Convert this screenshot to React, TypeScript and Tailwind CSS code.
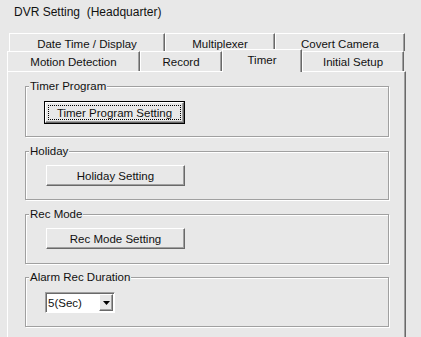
import React from 'react';

const raised =
  'border border-t-white border-l-white border-r-[#696969] border-b-[#696969] shadow-[inset_-1px_-1px_0_#a0a0a0]';

const tabBase =
  'flex items-center justify-center border-t border-l border-r border-t-white border-l-white border-r-[#696969] shadow-[inset_-1px_0_0_#a0a0a0]';

function Group({ title, box, children }: { title: string; box: string; children: React.ReactNode }) {
  return (
    <div className={`relative shrink-0 w-[364px] border border-[#a0a0a0] shadow-[inset_1px_1px_0_#ffffff,1px_1px_0_#ffffff] pl-[20px] ${box}`}>
      <span className="absolute -top-[7px] left-[3px] px-[1px] bg-[#e8e8e8] leading-[13px]">{title}</span>
      {children}
    </div>
  );
}

function Button({ label, focused }: { label: string; focused?: boolean }) {
  if (focused) {
    return (
      <div className="w-[141px] h-[23px] -ml-[2px] border border-black">
        <div className={`h-full ${raised} p-[2px]`}>
          <div className="h-full border border-dotted border-black flex items-center justify-center">
            {label}
          </div>
        </div>
      </div>
    );
  }
  return (
    <div className={`w-[139px] h-[21px] ${raised} flex items-center justify-center`}>{label}</div>
  );
}

export default function App() {
  return (
    <div
      className="w-[421px] h-[337px] overflow-hidden bg-[#e8e8e8] text-[#111] text-[11.5px] leading-[14px] flex flex-col"
      style={{ fontFamily: '"Liberation Sans", Arial, sans-serif' }}
    >
      <div className="shrink-0 h-[33px] pl-[14px] pt-[5px] text-[12px]">DVR Setting&nbsp; (Headquarter)</div>

      {/* tabs, back row */}
      <div className="shrink-0 ml-[9px] flex h-[18px]">
        <div className={`${tabBase} w-[156px] pt-[2px]`}>Date Time / Display</div>
        <div className={`${tabBase} w-[110px] pt-[2px]`}>Multiplexer</div>
        <div className={`${tabBase} w-[130px] pt-[2px]`}>Covert Camera</div>
      </div>

      {/* tabs, front row */}
      <div className="shrink-0 ml-[7px] flex h-[20px]">
        <div className={`${tabBase} w-[133px] pt-[1px]`}>Motion Detection</div>
        <div className={`${tabBase} w-[82px] pt-[1px]`}>Record</div>
        <div className={`${tabBase} relative z-10 w-[80px] h-[23px] -mt-[2px] bg-[#e8e8e8] pb-[3px]`}>Timer</div>
        <div className={`${tabBase} w-[102px] pt-[1px]`}>Initial Setup</div>
      </div>

      {/* panel */}
      <div className="ml-[7px] w-[399px] flex-1 min-h-0 overflow-hidden border-t border-l border-r border-t-white border-l-white border-r-[#696969] shadow-[inset_-1px_0_0_#a0a0a0] pl-[17px] pt-[14px] flex flex-col">
        <Group title="Timer Program" box="h-[51px] pt-[14px]">
          <Button label="Timer Program Setting" focused />
        </Group>
        <Group title="Holiday" box="mt-[14px] h-[49px] pt-[13px]">
          <Button label="Holiday Setting" />
        </Group>
        <Group title="Rec Mode" box="mt-[14px] h-[50px] pt-[13px]">
          <Button label="Rec Mode Setting" />
        </Group>
        <Group title="Alarm Rec Duration" box="mt-[13px] h-[50px] pt-[14px]">
          <div className="-ml-[1px] w-[70px] h-[21px] border border-t-[#a0a0a0] border-l-[#a0a0a0] border-r-white border-b-white shadow-[inset_1px_1px_0_#696969] bg-white flex items-stretch p-[1px] pl-[2px]">
            <div className="flex-1 flex items-center pt-[1px]">5(Sec)</div>
            <div className={`w-[14px] ${raised} bg-[#e8e8e8] flex items-center justify-center`}>
              <svg width="7" height="4" viewBox="0 0 7 4">
                <path d="M0 0 H7 L3.5 4 Z" fill="#000" />
              </svg>
            </div>
          </div>
        </Group>
      </div>
    </div>
  );
}
